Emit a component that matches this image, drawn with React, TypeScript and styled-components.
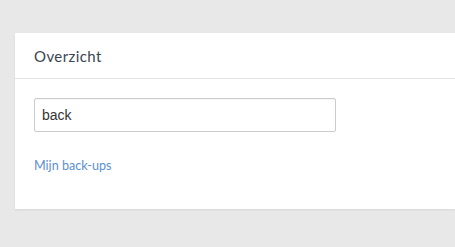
import React from "react";
import styled, { createGlobalStyle } from "styled-components";

const Global = createGlobalStyle`
  html, body { margin: 0; padding: 0; background: #e8e8e8; overflow: hidden; }
  body { font-family: "Lato", "Liberation Sans", sans-serif; }
`;

const Page = styled.div`
  padding: 33px 0 0 15px;
  width: 455px;
  height: 247px;
  box-sizing: border-box;
`;

const Card = styled.section`
  width: 100%;
  background: #ffffff;
  box-shadow: 0 1px 2px rgba(0, 0, 0, 0.08);
`;

const Header = styled.div`
  height: 45px;
  display: flex;
  align-items: center;
  padding: 0 19px;
  border-bottom: 1px solid #e4e4e4;
`;

const Title = styled.h2`
  margin: 0;
  font-family: "Lato", sans-serif;
  font-weight: 400;
  font-size: 15px;
  color: #3b4552;
  letter-spacing: 0.4px;
`;

const Body = styled.div`
  padding: 19px 19px 34px;
  display: flex;
  flex-direction: column;
  align-items: flex-start;
  gap: 25px;
`;

const SearchInput = styled.input`
  box-sizing: border-box;
  width: 302px;
  height: 34px;
  border: 1px solid #cccccc;
  border-radius: 2px;
  padding: 0 7px;
  font-family: "Liberation Sans", Arial, sans-serif;
  font-size: 14px;
  color: #333333;
  outline: none;
  box-shadow: inset 0 1px 1px rgba(0, 0, 0, 0.04);
`;

const Link = styled.a`
  font-family: "Lato", sans-serif;
  font-size: 12.6px;
  line-height: 18px;
  color: #5b8fd2;
  text-decoration: none;
`;

export default function App() {
  return (
    <>
      <Global />
      <Page>
        <Card>
          <Header>
            <Title>Overzicht</Title>
          </Header>
          <Body>
            <SearchInput defaultValue="back" />
            <Link href="#">Mijn back-ups</Link>
          </Body>
        </Card>
      </Page>
    </>
  );
}
